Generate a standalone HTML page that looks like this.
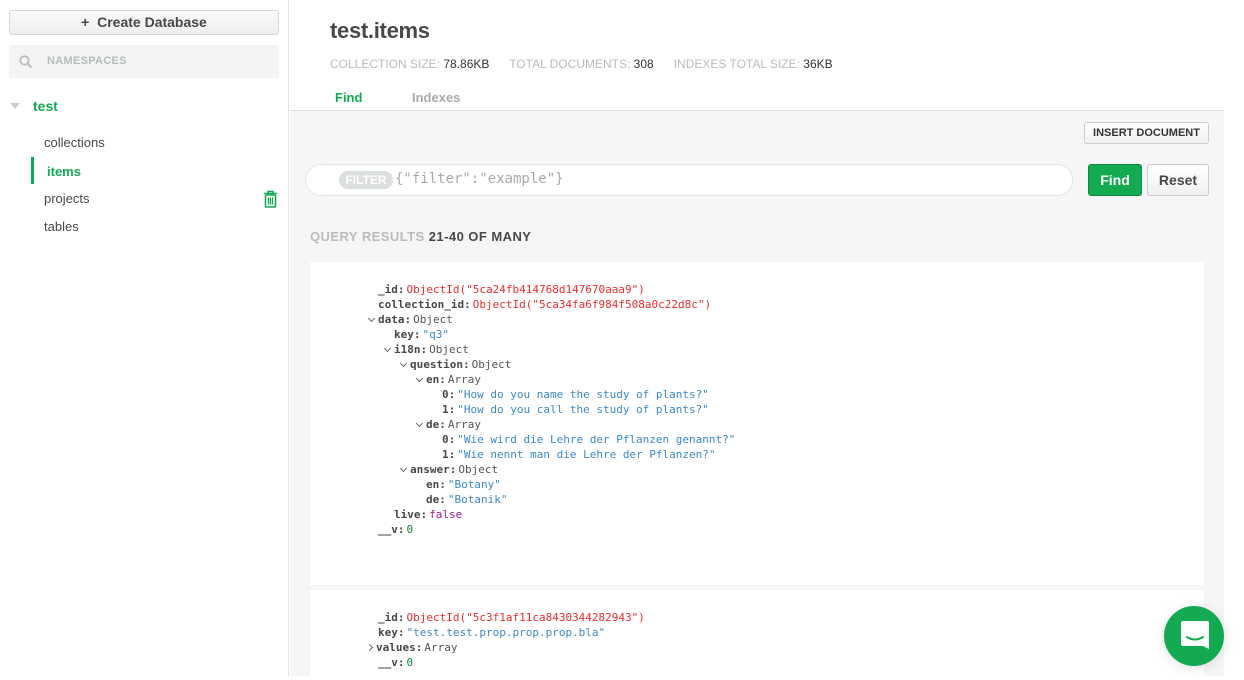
<!DOCTYPE html>
<html><head><meta charset="utf-8"><style>
*{margin:0;padding:0;box-sizing:border-box}
body{width:1244px;height:676px;overflow:hidden;background:#fff;font-family:"Liberation Sans",sans-serif;position:relative}
.side{position:absolute;left:0;top:0;width:289px;height:676px;background:#fff;border-right:1px solid #e4e4e4}
.cdb{position:absolute;left:9px;top:10px;width:270px;height:25px;border:1px solid #d6d6d6;border-radius:3px;background:linear-gradient(#fafafa,#eee);font-size:14px;font-weight:bold;color:#494747;text-align:center;line-height:23px}
.ns{position:absolute;left:9px;top:45px;width:270px;height:33px;background:#f3f4f4;font-size:11px;font-weight:bold;color:#b8bbbc;line-height:33px;padding-left:38px;letter-spacing:.3px}
.db{position:absolute;left:33px;top:98px;font-size:14px;font-weight:bold;color:#13aa52}
.tri{position:absolute;left:10px;top:103px;width:0;height:0;border-left:5px solid transparent;border-right:5px solid transparent;border-top:6px solid #ccc}
.it{position:absolute;left:44px;font-size:13px;color:#494747}
.main{position:absolute;left:290px;top:0;width:934px;height:676px;background:#f5f6f7}
.hdr{position:absolute;left:0;top:0;width:934px;height:111px;background:#fff;border-bottom:1px solid #ddd}
.title{position:absolute;left:40px;top:18px;font-size:22px;color:#494747;font-weight:bold;letter-spacing:-.3px}
.stats{position:absolute;left:40px;top:57px;font-size:12px;color:#bbb;white-space:nowrap}
.stats b{font-weight:normal;color:#333}
.tab{position:absolute;top:90px;font-size:13px;font-weight:bold}
.btn{position:absolute;border:1px solid #ccc;border-radius:3px;background:linear-gradient(#fff,#f0f0f0);text-align:center;font-weight:bold;color:#333}
.filter{position:absolute;left:15px;top:164px;width:768px;height:32px;background:#fff;border:1px solid #e4e4e4;border-radius:16px}
.pill{position:absolute;left:33px;top:6px;width:54px;height:18px;border-radius:9px;background:#dcdfdf;color:#fff;font-size:12px;font-weight:bold;text-align:center;line-height:18px}
.fq{position:absolute;left:89px;top:6px;font-family:"DejaVu Sans Mono",monospace;font-size:14px;color:#aaa}
.card{position:absolute;left:20px;width:894px;background:#fff}
.code{position:absolute;font-family:"DejaVu Sans Mono",monospace;font-size:11px;line-height:15px;white-space:pre;color:#555}
.l{position:absolute;white-space:pre}
.k{font-weight:bold;color:#494747;margin-right:2px}
.r{color:#ec2d2d}.s{color:#3d88c7}.p{color:#a0198f}.n{color:#1a7f3a}
.ch{display:inline-block;width:5px;height:5px;border-right:1px solid #666;border-bottom:1px solid #666;transform:rotate(45deg);margin:0 4px 3px 1px;vertical-align:middle}
.cr{transform:rotate(-45deg);margin-bottom:1px}
</style></head><body>
<div class="side">
<div class="cdb">+&nbsp; Create Database</div>
<div class="ns">NAMESPACES
<svg style="position:absolute;left:10px;top:10px" width="14" height="14" viewBox="0 0 14 14"><circle cx="5.5" cy="5.5" r="4.2" fill="none" stroke="#bbb" stroke-width="1.8"/><path d="M8.5 8.5L12.5 12.5" stroke="#bbb" stroke-width="2"/></svg></div>
<div class="tri"></div>
<div class="db">test</div>
<div class="it" style="top:135px">collections</div>
<div style="position:absolute;left:31px;top:157px;width:3px;height:27px;background:#13aa52"></div>
<div class="it" style="top:164px;left:47px;color:#13aa52;font-weight:bold">items</div>
<div class="it" style="top:191px">projects</div>
<svg style="position:absolute;left:263px;top:190px" width="15" height="18" viewBox="0 0 15 18"><path d="M1 3.5h13M5 3.5V1.5h5v2" fill="none" stroke="#13aa52" stroke-width="1.6"/><rect x="2.5" y="5" width="10" height="12" rx="1" fill="none" stroke="#13aa52" stroke-width="1.6"/><path d="M5.5 7.5v7M7.5 7.5v7M9.5 7.5v7" stroke="#13aa52" stroke-width="1.3"/></svg>
<div class="it" style="top:219px">tables</div>
</div>
<div class="main">
<div class="hdr">
<div class="title">test.items</div>
<div class="stats">COLLECTION SIZE: <b>78.86KB</b>&nbsp;&nbsp;&nbsp;&nbsp;&nbsp; TOTAL DOCUMENTS: <b>308</b>&nbsp;&nbsp;&nbsp;&nbsp;&nbsp; INDEXES TOTAL SIZE: <b>36KB</b></div>
<div class="tab" style="left:45px;color:#13aa52">Find</div>
<div class="tab" style="left:122px;color:#aaa">Indexes</div>
</div>
<div class="btn" style="left:794px;top:122px;width:125px;height:22px;font-size:11px;line-height:20px">INSERT DOCUMENT</div>
<div class="filter"><div class="pill">FILTER</div><div class="fq">{"filter":"example"}</div></div>
<div class="btn" style="left:798px;top:164px;width:54px;height:32px;font-size:14px;line-height:30px;background:#13aa52;border-color:#0e8a42;color:#fff">Find</div>
<div class="btn" style="left:857px;top:164px;width:62px;height:32px;font-size:14px;line-height:30px;color:#494747">Reset</div>
<div style="position:absolute;left:20px;top:229px;font-size:13px;font-weight:bold;color:#bbb;letter-spacing:.45px">QUERY RESULTS <span style="color:#494747">21-40 OF MANY</span></div>
<div class="card" style="top:262px;height:323px"></div>
<div class="card" style="top:590px;height:90px"></div>
</div>
<div class="code" style="left:0;top:0">
<div class="l" style="left:378px;top:282px"><span class="k">_id:</span><span class="r">ObjectId("5ca24fb414768d147670aaa9")</span></div>
<div class="l" style="left:378px;top:297px"><span class="k">collection_id:</span><span class="r">ObjectId("5ca34fa6f984f508a0c22d8c")</span></div>
<div class="l" style="left:368px;top:312px"><i class="ch"></i><span class="k">data:</span>Object</div>
<div class="l" style="left:394px;top:327px"><span class="k">key:</span><span class="s">"q3"</span></div>
<div class="l" style="left:384px;top:342px"><i class="ch"></i><span class="k">i18n:</span>Object</div>
<div class="l" style="left:400px;top:357px"><i class="ch"></i><span class="k">question:</span>Object</div>
<div class="l" style="left:416px;top:372px"><i class="ch"></i><span class="k">en:</span>Array</div>
<div class="l" style="left:442px;top:387px"><span class="k">0:</span><span class="s">"How do you name the study of plants?"</span></div>
<div class="l" style="left:442px;top:402px"><span class="k">1:</span><span class="s">"How do you call the study of plants?"</span></div>
<div class="l" style="left:416px;top:417px"><i class="ch"></i><span class="k">de:</span>Array</div>
<div class="l" style="left:442px;top:432px"><span class="k">0:</span><span class="s">"Wie wird die Lehre der Pflanzen genannt?"</span></div>
<div class="l" style="left:442px;top:447px"><span class="k">1:</span><span class="s">"Wie nennt man die Lehre der Pflanzen?"</span></div>
<div class="l" style="left:400px;top:462px"><i class="ch"></i><span class="k">answer:</span>Object</div>
<div class="l" style="left:426px;top:477px"><span class="k">en:</span><span class="s">"Botany"</span></div>
<div class="l" style="left:426px;top:492px"><span class="k">de:</span><span class="s">"Botanik"</span></div>
<div class="l" style="left:394px;top:507px"><span class="k">live:</span><span class="p">false</span></div>
<div class="l" style="left:378px;top:522px"><span class="k">__v:</span><span class="n">0</span></div>
<div class="l" style="left:378px;top:610px"><span class="k">_id:</span><span class="r">ObjectId("5c3f1af11ca8430344282943")</span></div>
<div class="l" style="left:378px;top:625px"><span class="k">key:</span><span class="s">"test.test.prop.prop.prop.bla"</span></div>
<div class="l" style="left:366px;top:640px"><i class="ch cr"></i><span class="k">values:</span>Array</div>
<div class="l" style="left:378px;top:655px"><span class="k">__v:</span><span class="n">0</span></div>
</div>
<div style="position:absolute;left:1164px;top:606px;width:60px;height:60px;border-radius:50%;background:#13aa52;box-shadow:0 2px 12px rgba(0,0,0,.12)">
<svg style="position:absolute;left:16px;top:14px" width="30" height="32" viewBox="0 0 30 32"><path d="M3 1h24a2 2 0 0 1 2 2v26l-6-3H3a2 2 0 0 1-2-2V3a2 2 0 0 1 2-2z" fill="#fff"/><path d="M7 17q8 5 16 0" fill="none" stroke="#13aa52" stroke-width="2" stroke-linecap="round"/></svg></div>
</body></html>
